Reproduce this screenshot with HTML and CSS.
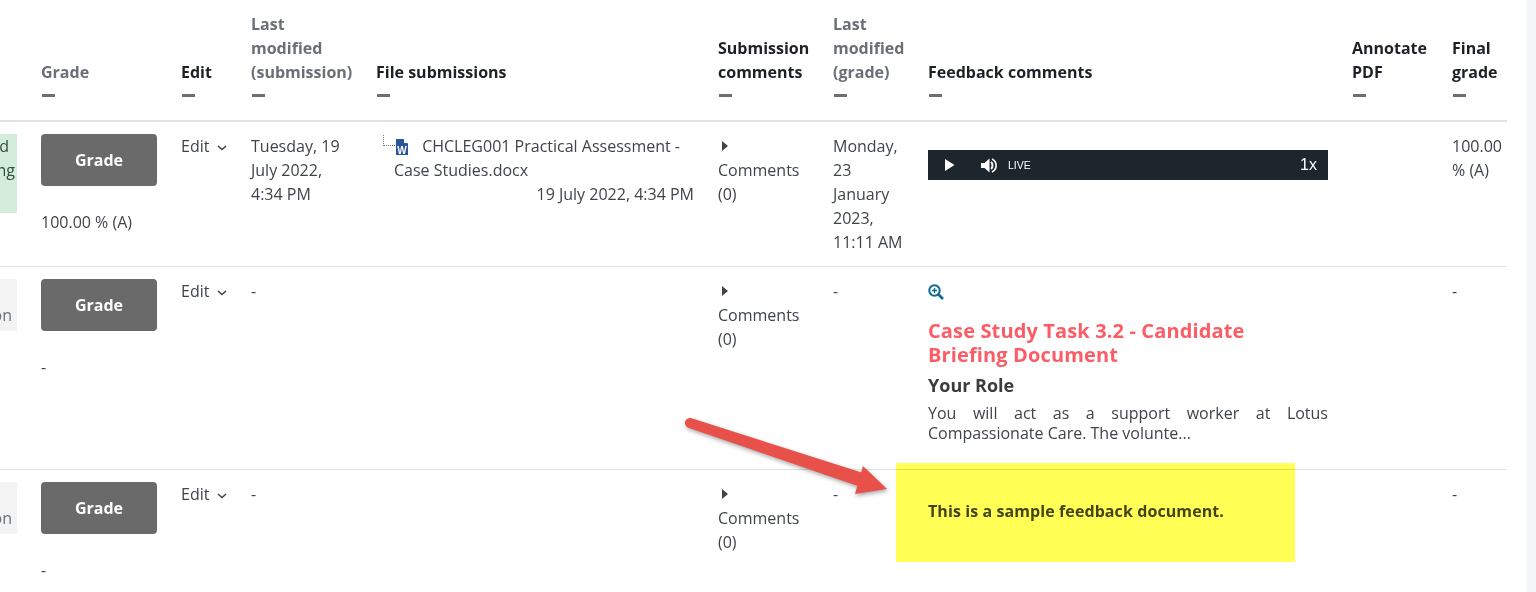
FILE: index.html
```html
<!DOCTYPE html>
<html lang="en">
<head>
    <meta charset="UTF-8">
    <title>Grading</title>
    <link rel="stylesheet" href="styles.css">
</head>
<body>
<div class="page">
    <table class="grades">
        <colgroup>
            <col class="c-status"><col class="c-grade"><col class="c-edit"><col class="c-modified">
            <col class="c-files"><col class="c-comments"><col class="c-graded"><col class="c-feedback">
            <col class="c-annotate"><col class="c-final">
        </colgroup>
        <thead>
            <tr>
                <th></th>
                <th class="muted">Grade<span class="dash"></span></th>
                <th>Edit<span class="dash"></span></th>
                <th class="muted">Last<br>modified (submission)<span class="dash"></span></th>
                <th>File submissions<span class="dash"></span></th>
                <th>Submission comments<span class="dash"></span></th>
                <th class="muted">Last modified (grade)<span class="dash"></span></th>
                <th>Feedback comments<span class="dash"></span></th>
                <th>Annotate PDF<span class="dash"></span></th>
                <th>Final grade<span class="dash"></span></th>
            </tr>
        </thead>
        <tbody>
            <tr>
                <td class="status-cell">
                    <div class="status status-green">
                        <span class="line-a">Submitted</span>
                        <span class="line-b">for grading</span>
                    </div>
                </td>
                <td>
                    <a class="grade-btn">Grade</a>
                    <div class="grade-value">100.00 % (A)</div>
                </td>
                <td class="edit-cell">Edit <svg class="chevron" width="10" height="6" viewBox="0 0 10 6"><polyline points="1,1 5,4.5 9,1"/></svg></td>
                <td>Tuesday, 19 July 2022, 4:34&nbsp;PM</td>
                <td>
                    <div class="file">
                        <span class="tree-line"></span>
                        <svg class="word-icon" width="12" height="16" viewBox="0 0 12 16">
                            <path d="M0 0H7.500L12 4.500V16H0Z" fill="#2b579a"/>
                            <path d="M8 0L12 4H8Z" fill="#fff"/>
                            <text x="6" y="15" text-anchor="middle">W</text>
                        </svg>
                        <span class="file-name">CHCLEG001 Practical Assessment - Case Studies.docx</span>
                    </div>
                    <div class="file-date">19 July 2022, 4:34 PM</div>
                </td>
                <td><span class="arrow-right"></span>Comments (0)</td>
                <td>Monday, 23 January 2023, 11:11&nbsp;AM</td>
                <td>
                    <div class="player">
                        <svg class="play" width="10" height="12" viewBox="0 0 10 12"><path d="M0 0L9.500 6L0 12Z"/></svg>
                        <svg class="volume" width="16" height="15" viewBox="0 0 16 15">
                            <path d="M0 5H3.500L8.500 .5V14.500L3.500 10H0Z" fill="#fff"/>
                            <path d="M10 4C12 5.500 12 9.500 10 11" fill="none" stroke="#fff" stroke-width="2"/>
                            <path d="M11 1C16.500 4 16.500 11 11 14" fill="none" stroke="#fff" stroke-width="1.600"/>
                        </svg>
                        <span class="live">LIVE</span>
                        <span class="speed">1x</span>
                    </div>
                </td>
                <td></td>
                <td>100.00 % (A)</td>
            </tr>
            <tr>
                <td class="status-cell">
                    <div class="status status-grey"><span class="line-c">submission</span></div>
                </td>
                <td>
                    <a class="grade-btn">Grade</a>
                    <div class="grade-value">-</div>
                </td>
                <td class="edit-cell">Edit <svg class="chevron" width="10" height="6" viewBox="0 0 10 6"><polyline points="1,1 5,4.5 9,1"/></svg></td>
                <td>-</td>
                <td></td>
                <td><span class="arrow-right"></span>Comments (0)</td>
                <td>-</td>
                <td>
                    <svg class="zoom-icon" width="16" height="16" viewBox="0 0 16 16">
                        <circle cx="6.500" cy="6.500" r="5.200"/>
                        <path d="M10.500 10.500L15 15" stroke-width="2.600"/>
                        <path d="M6.500 4V9M4 6.500H9" stroke-width="1.400"/>
                    </svg>
                    <h3 class="fb-title">Case Study Task 3.2 - Candidate Briefing Document</h3>
                    <h4 class="fb-sub">Your Role</h4>
                    <p class="fb-text">You will act as a support worker at Lotus Compassionate Care. The volunte...</p>
                </td>
                <td></td>
                <td>-</td>
            </tr>
            <tr>
                <td class="status-cell">
                    <div class="status status-grey"><span class="line-c">submission</span></div>
                </td>
                <td>
                    <a class="grade-btn">Grade</a>
                    <div class="grade-value">-</div>
                </td>
                <td class="edit-cell">Edit <svg class="chevron" width="10" height="6" viewBox="0 0 10 6"><polyline points="1,1 5,4.5 9,1"/></svg></td>
                <td>-</td>
                <td></td>
                <td><span class="arrow-right"></span>Comments (0)</td>
                <td>-</td>
                <td><p class="fb-sample">This is a sample feedback document.</p></td>
                <td></td>
                <td>-</td>
            </tr>
        </tbody>
    </table>

    <!-- annotation drawn on top of the screenshot -->
    <div class="highlight"></div>
    <svg class="annotation" width="240" height="100" viewBox="0 0 240 100">
        <path d="M11.600 8.250L187.200 64.350L182.800 77.650L8.400 17.750A5 5 0 0 1 11.600 8.250Z" fill="#e8504a"/>
        <path d="M183 56L207 79L175 84Z" fill="#e8504a"/>
    </svg>
</div>
</body>
</html>
```

FILE: styles.css
```css
html, body {
    margin: 0;
    height: 592px;
    overflow: hidden;
    background: #f4f5f7;
}

body {
    font-family: "Open Sans", "Liberation Sans", sans-serif;
    font-size: 16px;
    line-height: 24px;
    color: #3f444a;
}

.page {
    position: relative;
    width: 1527px;
    height: 592px;
    overflow: hidden;
    background: #fff;
}

.grades {
    width: 1507px;
    table-layout: fixed;
    border-collapse: separate;
    border-spacing: 0;
}

.c-status { width: 29px; }
.c-grade { width: 140px; }
.c-edit { width: 70px; }
.c-modified { width: 125px; }
.c-files { width: 342px; }
.c-comments { width: 115px; }
.c-graded { width: 95px; }
.c-feedback { width: 424px; }
.c-annotate { width: 100px; }
.c-final { width: 67px; }

.grades th {
    padding: 12px;
    text-align: left;
    vertical-align: bottom;
    font-weight: 700;
    color: #1d2125;
    border-bottom: 2px solid #dee2e6;
}

.grades th.muted {
    color: #6a6f75;
}

.dash {
    display: block;
    width: 13px;
    height: 3px;
    margin: 10px 0 11px 1px;
    background: #6e6e6e;
}

.grades td {
    padding: 12px;
    vertical-align: top;
    border-bottom: 1px solid #dee2e6;
}

.grades td.status-cell {
    padding: 12px 12px 12px 0;
}

.grades td.edit-cell {
    white-space: nowrap;
}

.status {
    display: flex;
    flex-direction: column;
    align-items: flex-end;
    width: 17px;
    overflow: hidden;
    white-space: nowrap;
}

.status-green {
    height: 79px;
    background: #d4edda;
    color: #2f4f38;
}

.status-grey {
    height: 52px;
    background: #f3f3f3;
    color: #6a737b;
}

.line-a { padding-right: 8px; }
.line-b { padding-right: 2px; }
.line-c { padding-right: 5px; margin-top: 24px; }

.grade-btn {
    display: block;
    width: 116px;
    height: 52px;
    line-height: 52px;
    text-align: center;
    font-weight: 700;
    color: #fff;
    background: #6a6a6a;
    border-radius: 4px;
}

.grade-value {
    margin-top: 24px;
}

.chevron {
    margin-left: 3px;
    vertical-align: 1px;
}

.chevron polyline {
    fill: none;
    stroke: #3f444a;
    stroke-width: 1.6;
}

.file {
    position: relative;
    padding-left: 18px;
}

.tree-line {
    position: absolute;
    left: 7px;
    top: 1px;
    width: 12px;
    height: 11px;
    border-left: 1px dotted #777;
    border-bottom: 1px dotted #777;
    box-sizing: border-box;
}

.word-icon {
    margin: 0 10px 0 2px;
    vertical-align: -3px;
}

.word-icon text {
    font-family: "Liberation Sans", sans-serif;
    font-size: 10px;
    font-weight: 700;
    fill: #fff;
}

.file-date {
    text-align: right;
}

.arrow-right {
    display: block;
    width: 0;
    height: 10px;
    margin: 7px 0 7px 4px;
    box-sizing: border-box;
    border-left: 6px solid #3f444a;
    border-top: 5px solid transparent;
    border-bottom: 5px solid transparent;
}

.player {
    display: flex;
    align-items: center;
    width: 400px;
    height: 30px;
    margin-top: 16px;
    background: #1d252d;
    color: #fff;
    font-family: "Liberation Sans", sans-serif;
}

.play {
    margin-left: 17px;
    fill: #fff;
}

.volume {
    margin-left: 26px;
}

.live {
    margin-left: 11px;
    font-size: 10.500px;
}

.speed {
    margin-left: auto;
    margin-right: 11px;
    font-size: 16px;
}

.zoom-icon {
    display: block;
    margin: 5px 0 0 0;
}

.zoom-icon circle,
.zoom-icon path {
    fill: none;
    stroke: #0f6a94;
}

.zoom-icon circle {
    stroke-width: 2;
}

.fb-title {
    max-width: 340px;
    margin: 19px 0 0;
    font-size: 20px;
    line-height: 24px;
    font-weight: 700;
    letter-spacing: 0.13px;
    color: #fc5c65;
}

.fb-sub {
    margin: 6px 0 0;
    font-size: 18px;
    line-height: 24px;
    font-weight: 700;
    color: #3c3c3c;
}

.fb-text {
    margin: 6px 0 14px;
    line-height: 20px;
    text-align: justify;
}

.fb-sample {
    margin: 17px 0 0;
    font-weight: 700;
    letter-spacing: 0.09px;
    color: #444;
}

.highlight {
    position: absolute;
    left: 896px;
    top: 463px;
    width: 399px;
    height: 99px;
    background: #ffff56;
    mix-blend-mode: multiply;
}

.annotation {
    position: absolute;
    left: 680px;
    top: 410px;
    filter: drop-shadow(1px 2px 2px rgba(0, 0, 0, 0.35));
}
```
